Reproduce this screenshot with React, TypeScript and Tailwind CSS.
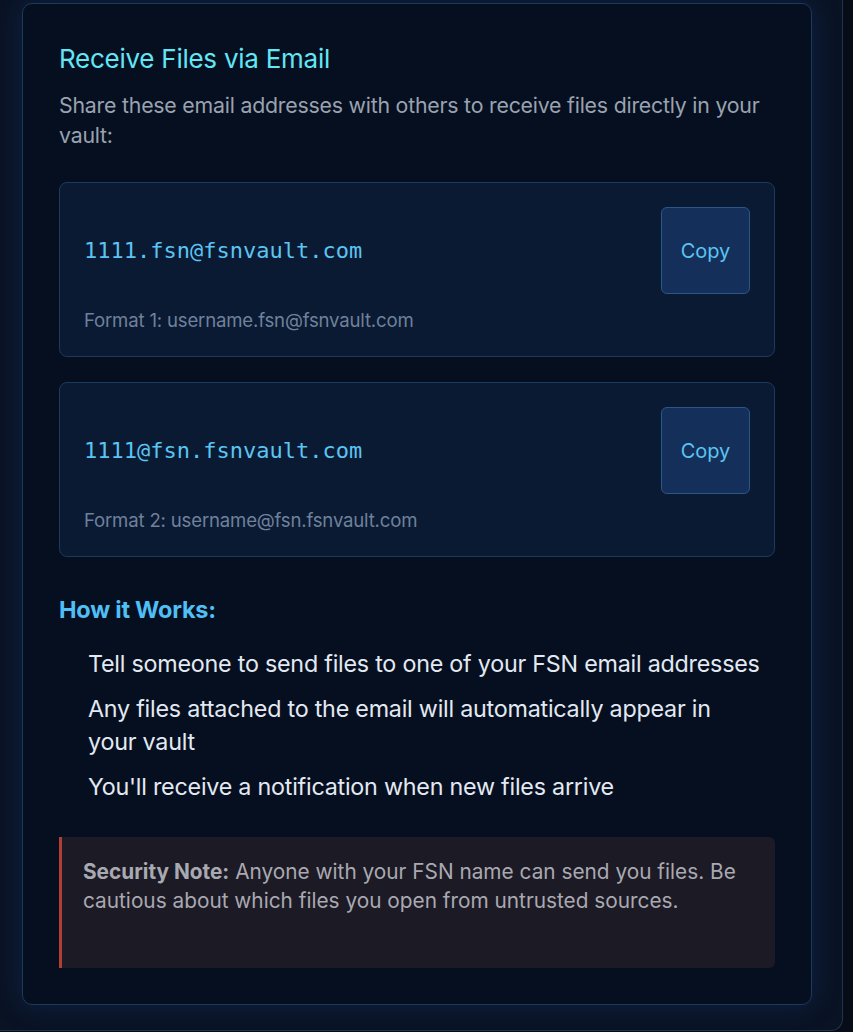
import React from "react";

const sans = { fontFamily: "Inter, 'Noto Sans', sans-serif" };
const mono = { fontFamily: "'DejaVu Sans Mono', 'Liberation Mono', monospace" };

function EmailCard({ email, format }: { email: string; format: string }) {
  return (
    <div className="rounded-lg border border-[#1b3a5e] bg-[#0a1a33] p-6">
      <div className="flex items-center justify-between">
        <div className="text-[22px] leading-[28px] text-[#5cc4f2]" style={mono}>
          {email}
        </div>
        <button className="flex h-[87px] w-[89px] items-center justify-center rounded-md border border-[#2c5686] bg-[#14305a] text-[20px] text-[#5cc4f2]">
          Copy
        </button>
      </div>
      <div className="mt-[14px] text-[18.6px] leading-[24px] tracking-[-0.01em] text-[#6f819b]">{format}</div>
    </div>
  );
}

export default function App() {
  return (
    <div className="h-[1032px] w-[853px] overflow-hidden bg-[#070c16]" style={sans}>
      <div className="h-[1031px] w-[843px] rounded-br-xl border-r border-b border-[#1b3550] bg-[#0a1324] pl-[22px] pt-[3px]">
        <div className="w-[790px] rounded-[10px] border border-[#1b3a5c] bg-[#050f1f] px-[36px] pt-[38px] pb-[36px] shadow-[0_0_28px_rgba(25,70,150,0.3)]">
          <h2 className="text-[26px] leading-[34px] tracking-[-0.01em] text-[#62e6f6]">Receive Files via Email</h2>
          <p className="mt-[14px] text-[21.3px] leading-[30px] tracking-[-0.01em] text-[#9aa2b0]">
            Share these email addresses with others to receive files directly in your vault:
          </p>
          <div className="mt-[32px] flex flex-col gap-[25px]">
            <EmailCard email="1111.fsn@fsnvault.com" format="Format 1: username.fsn@fsnvault.com" />
            <EmailCard email="1111@fsn.fsnvault.com" format="Format 2: username@fsn.fsnvault.com" />
          </div>
          <h3 className="mt-[38px] text-[23.5px] font-bold leading-[30px] tracking-[-0.01em] text-[#4fbff5]">How it Works:</h3>
          <ul className="mt-[22px] flex flex-col gap-[12px] pl-[29px] pr-[13px] text-[23.3px] leading-[33px] tracking-[-0.01em] text-[#e3e9f2]">
            <li>Tell someone to send files to one of your FSN email addresses</li>
            <li>Any files attached to the email will automatically appear in your vault</li>
            <li>You'll receive a notification when new files arrive</li>
          </ul>
          <div className="mt-[34px] h-[131px] rounded-r-md border-l-[3px] border-[#b03e35] bg-[#1c1a24] px-[21px] pt-[20px] text-[20.8px] leading-[29px] text-[#a9a9b2]">
            <span className="font-bold">Security Note:</span> Anyone with your FSN name can send you files. Be cautious about which files you open from untrusted sources.
          </div>
        </div>
      </div>
    </div>
  );
}
